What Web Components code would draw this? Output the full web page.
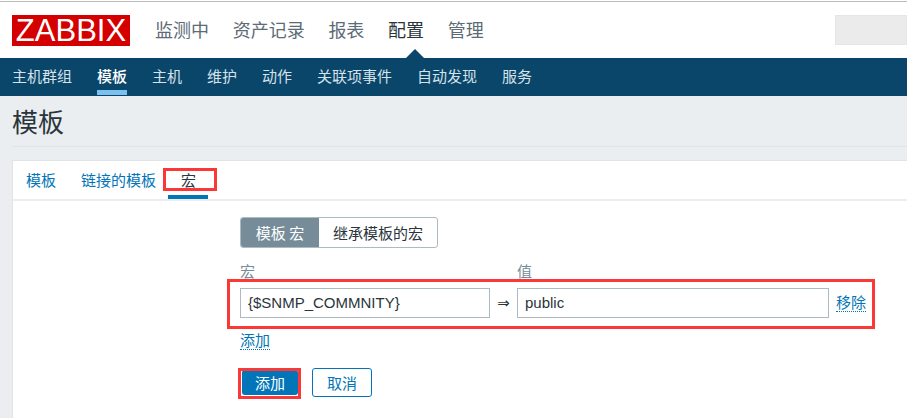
<!DOCTYPE html>
<html lang="zh">
<head>
<meta charset="utf-8">
<style>
html,body{margin:0;padding:0;background:#ebeef0;overflow:hidden}
body{width:907px;height:418px;position:relative;font-family:"Noto Sans CJK SC","Liberation Sans",sans-serif}
</style>
</head>
<body>
<zbx-top active="配置" items="监测中,资产记录,报表,配置,管理"></zbx-top>
<zbx-sub active="模板" items="主机群组,模板,主机,维护,动作,关联项事件,自动发现,服务"></zbx-sub>
<zbx-title>模板</zbx-title>
<zbx-card>
  <zbx-form></zbx-form>
</zbx-card>
<zbx-mark style="left:163px;top:168px;width:54px;height:23px"></zbx-mark>
<zbx-mark style="left:227px;top:279px;width:648px;height:50px"></zbx-mark>
<zbx-mark style="left:238px;top:368px;width:63px;height:31px"></zbx-mark>
<script>
const FONT='"Noto Sans CJK SC","Liberation Sans",sans-serif';
function def(name,html,init){
  customElements.define(name,class extends HTMLElement{
    constructor(){super();this.attachShadow({mode:'open'}).innerHTML=html}
    connectedCallback(){if(init)init(this)}
  });
}
def('zbx-top',`<style>
:host{display:flex;align-items:flex-start;box-sizing:border-box;height:57px;background:#fff;border-top:1px solid #bbb;margin-top:1px;padding:13px 0 0 12px;position:relative;box-shadow:0 -1px 0 #fff}
.logo{width:118px;height:31px;background:#d40000;color:#fff;font:400 31px/32px "Liberation Sans",sans-serif;text-align:center;flex:none;margin-right:25px}
nav{display:flex;gap:23.7px;font:400 18px/28px ${FONT};color:#5c6b75}
nav span{display:block;position:relative}
nav span.on{color:#2a353b}
nav span.on::after{content:"";position:absolute;left:50%;margin-left:-1px;bottom:-16px;border:10px solid transparent;border-top:0;border-bottom-color:#0a466a}
.search{position:absolute;left:835px;top:13px;width:72px;height:30px;box-sizing:border-box;background:#ebebeb;border:1px solid #e6e6e6}
</style><div class="logo">ZABBIX</div><nav></nav><div class="search"></div>`,
el=>{const n=el.shadowRoot.querySelector('nav');n.innerHTML='';
 el.getAttribute('items').split(',').forEach(t=>{const s=document.createElement('span');s.textContent=t;if(t===el.getAttribute('active'))s.className='on';n.append(s)})});
def('zbx-sub',`<style>
:host{display:flex;height:38px;background:#0a466a;padding-left:12px;gap:25px;font:400 15px/35px ${FONT};color:#d6e2ea}
span{display:block;height:38px;box-sizing:border-box;position:relative}
span.on{color:#fff;font-weight:500}
span.on::after{content:"";position:absolute;left:0;right:0;top:32px;height:5px;background:#7cc0ef}
</style><div style="display:contents"></div>`,
el=>{const n=el.shadowRoot.querySelector('div');n.innerHTML='';
 el.getAttribute('items').split(',').forEach(t=>{const s=document.createElement('span');s.textContent=t;if(t===el.getAttribute('active'))s.className='on';n.append(s)})});
def('zbx-title',`<style>
:host{display:block;height:50px;margin:0 0 0 12px;border-bottom:1px solid #dfe4e7;font:400 26px/50px ${FONT};color:#2a353b;box-sizing:content-box}
</style><slot></slot>`);
def('zbx-card',`<style>
:host{display:block;margin:13px 0 0 12px;background:#fff;border:1px solid #dfe4e7;border-right:0;border-bottom:0;height:260px}
.tabs{display:flex;height:38px;padding-left:13px;gap:25px;border-bottom:2px solid #ebeef0;font:400 15px/37px ${FONT};color:#0275b8}
.tabs span{display:block;position:relative;height:38px}
.tabs .on{color:#2a353b;width:15px}
.tabs .on::after{content:"";position:absolute;left:-13px;right:-12px;top:34px;height:4px;background:#0275b8}
</style><div class="tabs"><span>模板</span><span>链接的模板</span><span class="on">宏</span></div><slot></slot>`);
def('zbx-form',`<style>
:host{display:block;padding:16px 0 0 227px;font:400 15px/20px ${FONT};color:#2a353b}
.seg{display:flex;width:198px;height:31px;box-sizing:border-box;border:1px solid #acbbc2;border-radius:3px;overflow:hidden;line-height:30px}
.seg b{font-weight:400;background:#768d99;color:#fff;width:78px;text-align:center}
.seg i{font-style:normal;width:118px;text-align:center}
.labels{display:flex;margin-top:13px;height:26px;color:#768d99;line-height:20px;margin-bottom:1px}
.labels span:first-child{width:277px}
.row{display:flex;align-items:center;height:30px;margin-top:0}
.inp{box-sizing:border-box;height:30px;border:1px solid #acbbc2;padding:0 7px;font:400 15px/27px "Liberation Sans",sans-serif;color:#2a353b;white-space:nowrap}
.a1{width:250px}.a2{width:312px}
.arr{width:27px;text-align:center;font:400 15px/30px "DejaVu Sans",sans-serif}
.lnk{color:#0275b8;line-height:18px;border-bottom:1px dotted #0275b8;display:inline-block;height:18px}
.rm{margin-left:7px;margin-top:-1px}
.add{margin-top:13px;display:block;width:30px}
.btns{display:flex;margin-top:18px;align-items:center;gap:14px;margin-left:2px}
.b{box-sizing:border-box;border-radius:3px;text-align:center}
.p{width:56px;height:25px;background:#0275b8;color:#fff;line-height:25px}
.s{width:60px;height:29px;border:1px solid #0275b8;color:#0275b8;line-height:27px}
</style>
<div class="seg"><b>模板 宏</b><i>继承模板的宏</i></div>
<div class="labels"><span>宏</span><span>值</span></div>
<div class="row"><div class="inp a1">{$SNMP_COMMNITY}</div><div class="arr">⇒</div><div class="inp a2">public</div><span class="lnk rm">移除</span></div>
<span class="lnk add">添加</span>
<div class="btns"><div class="b p">添加</div><div class="b s">取消</div></div>`);
def('zbx-mark',`<style>
:host{display:block;position:absolute;box-sizing:border-box;border:3px solid #fb3838;pointer-events:none}
</style>`);
</script>
</body>
</html>
